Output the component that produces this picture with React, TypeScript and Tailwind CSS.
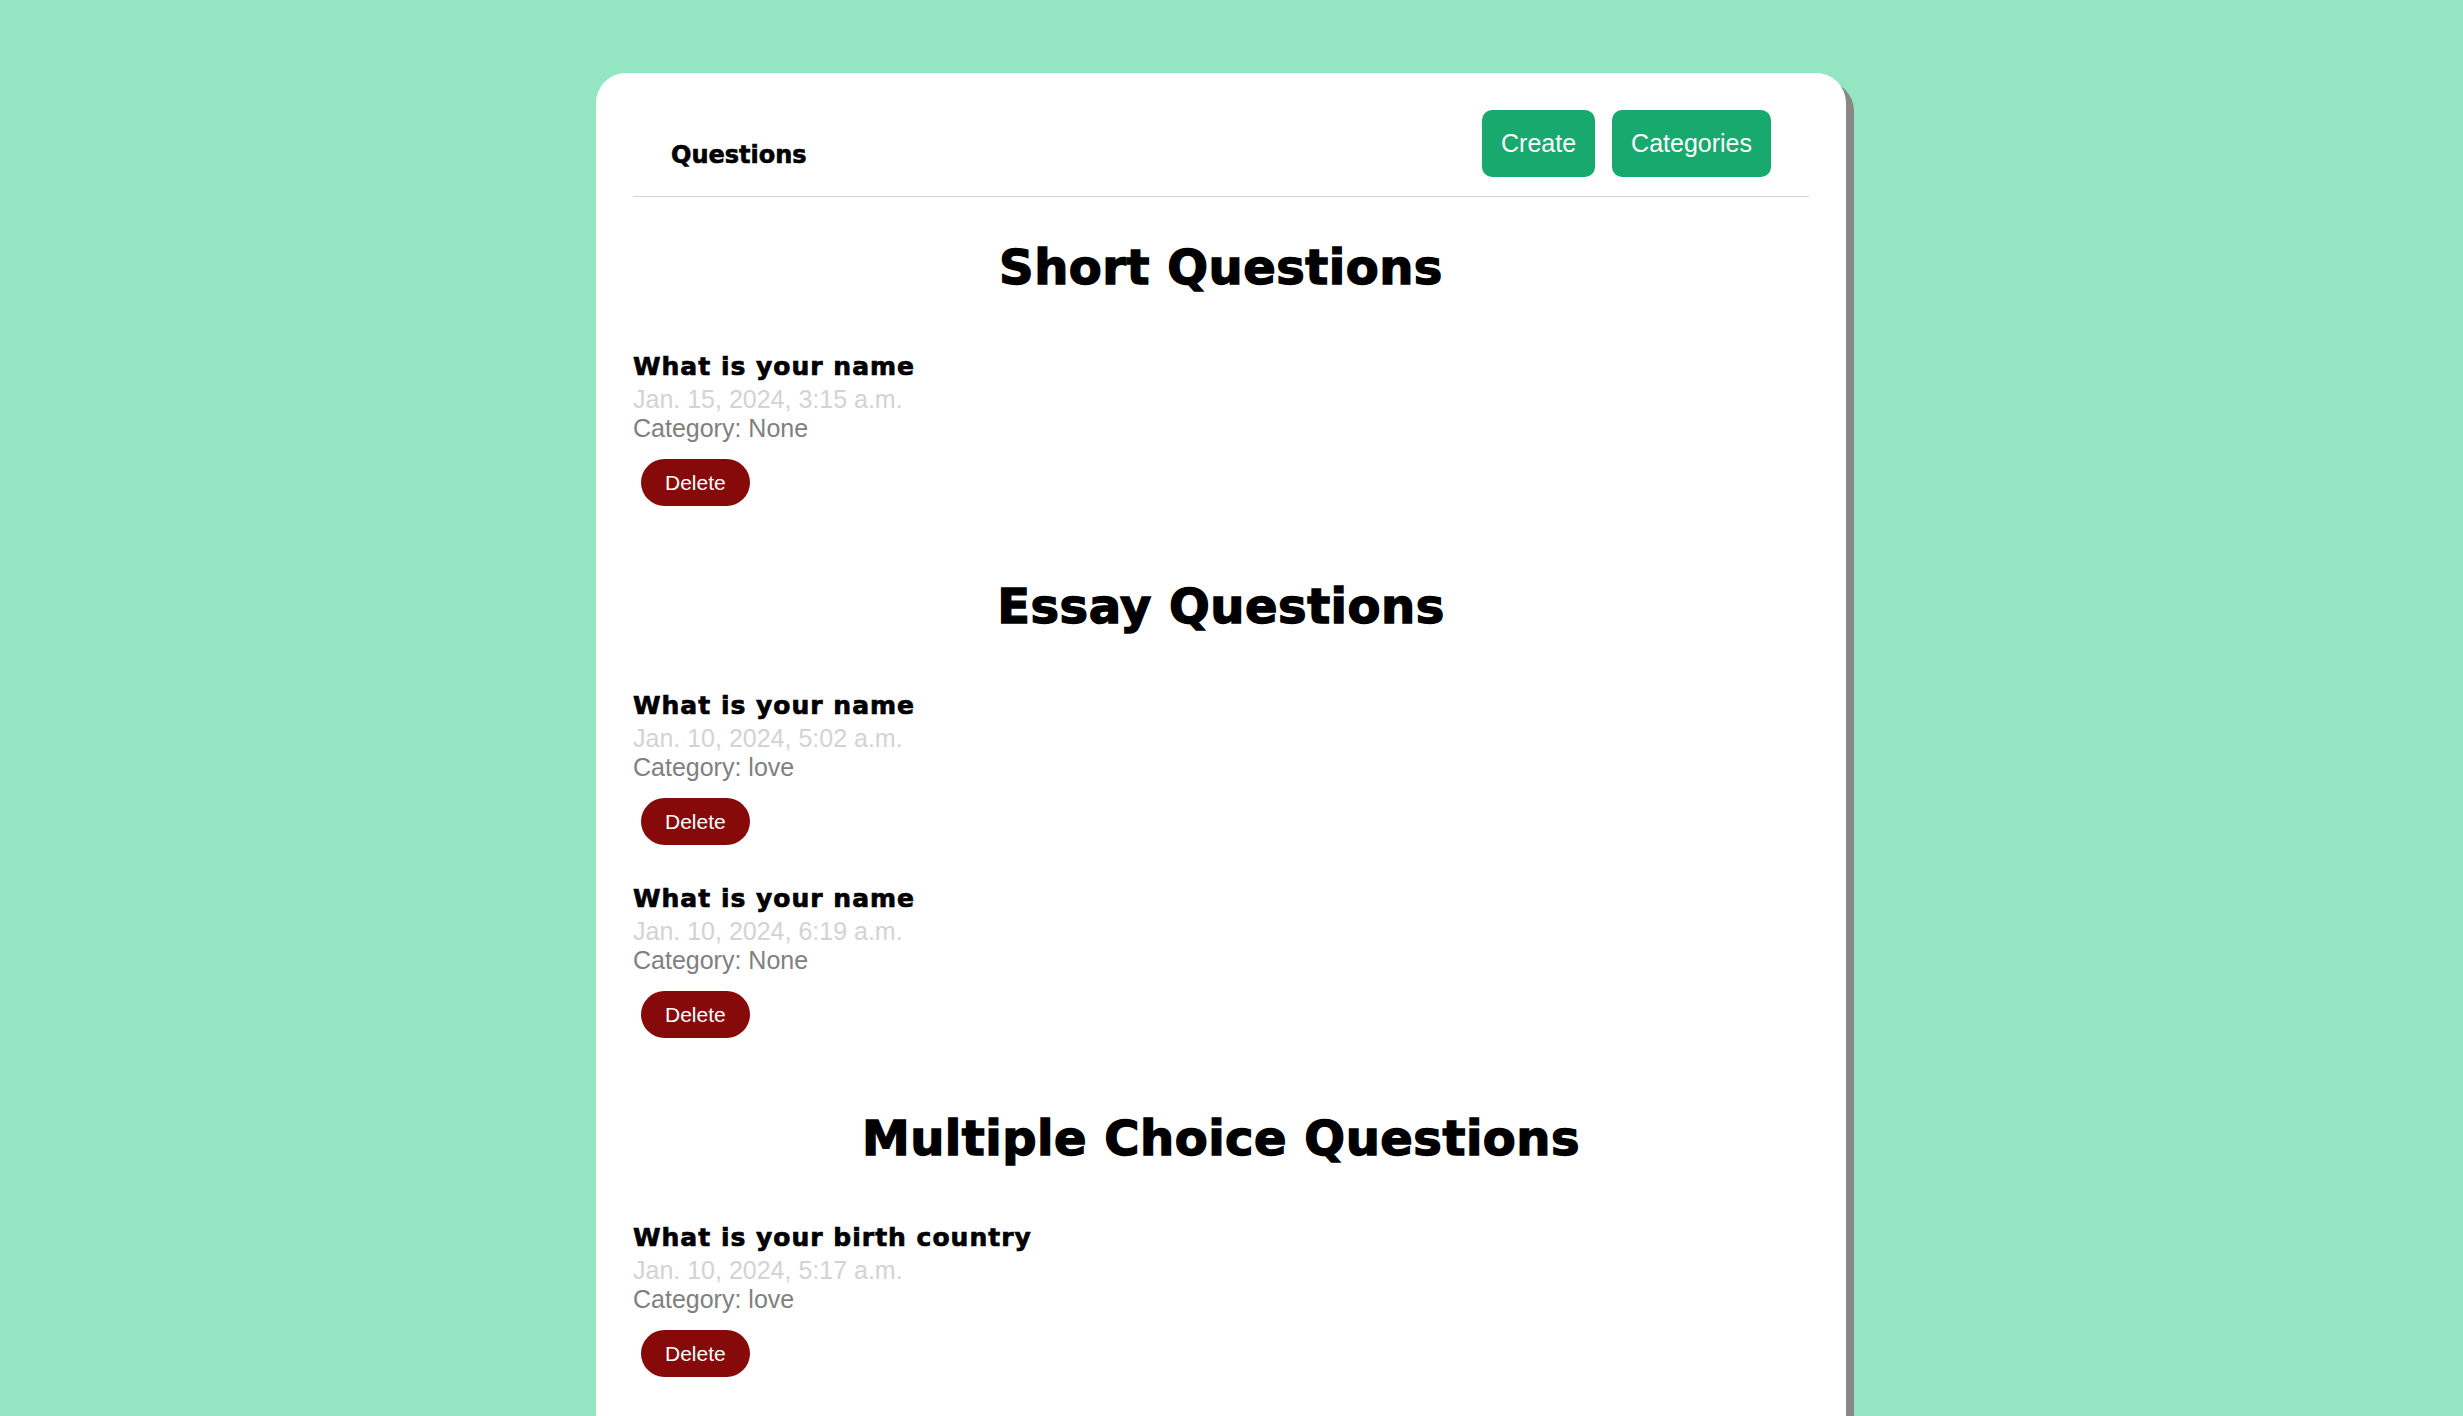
const sections = [
  {
    title: "Short Questions",
    items: [{ q: "What is your name", date: "Jan. 15, 2024, 3:15 a.m.", category: "None" }],
  },
  {
    title: "Essay Questions",
    items: [
      { q: "What is your name", date: "Jan. 10, 2024, 5:02 a.m.", category: "love" },
      { q: "What is your name", date: "Jan. 10, 2024, 6:19 a.m.", category: "None" },
    ],
  },
  {
    title: "Multiple Choice Questions",
    items: [{ q: "What is your birth country", date: "Jan. 10, 2024, 5:17 a.m.", category: "love" }],
  },
];

const heavy = "font-['DejaVu_Sans',sans-serif] font-bold text-black";
const plain = "font-['Liberation_Sans',Arial,sans-serif]";

const QuestionItem = ({ q, date, category }: { q: string; date: string; category: string }) => (
  <div className="flex flex-col items-start">
    <h3 className={`${heavy} text-[25px] leading-[30px] tracking-[1px] [-webkit-text-stroke:0.7px_black]`}>{q}</h3>
    <p className={`${plain} mt-[3px] text-[25px] leading-[29px] text-[#d3d3d3]`}>{date}</p>
    <p className={`${plain} text-[25px] leading-[29px] text-[#808080]`}>Category: {category}</p>
    <button
      className={`${plain} ml-[8px] mt-[16px] h-[47px] rounded-full bg-[#860a0a] px-[24px] text-[21px] text-white`}
    >
      Delete
    </button>
  </div>
);

export default function App() {
  return (
    <div className="h-screen overflow-hidden bg-[#94e6c3] pl-[596px] pt-[73px]">
      <div className="w-[1250px] rounded-[30px] bg-white px-[37px] pb-[80px] shadow-[8px_8px_0_0_#888888]">
        <header className="flex items-start justify-between border-b border-[#d3d3d3] px-[38px] pb-[19px] pt-[37px]">
          <h1 className={`${heavy} mt-[33px] text-[24px] leading-none [-webkit-text-stroke:0.6px_black]`}>Questions</h1>
          <div className="flex gap-[17px]">
            <button className={`${plain} h-[67px] rounded-[10px] bg-[#17a96d] px-[19px] text-[25px] text-white`}>
              Create
            </button>
            <button className={`${plain} h-[67px] rounded-[10px] bg-[#17a96d] px-[19px] text-[25px] text-white`}>
              Categories
            </button>
          </div>
        </header>

        <main className="mt-[42px] flex flex-col gap-[72px]">
          {sections.map((s) => (
            <section key={s.title}>
              <h2 className={`${heavy} text-center text-[48px] leading-[56px] tracking-[0.5px] [-webkit-text-stroke:1.4px_black]`}>
                {s.title}
              </h2>
              <div className="mt-[57px] flex flex-col gap-[39px]">
                {s.items.map((it, i) => (
                  <QuestionItem key={i} {...it} />
                ))}
              </div>
            </section>
          ))}
        </main>
      </div>
    </div>
  );
}
